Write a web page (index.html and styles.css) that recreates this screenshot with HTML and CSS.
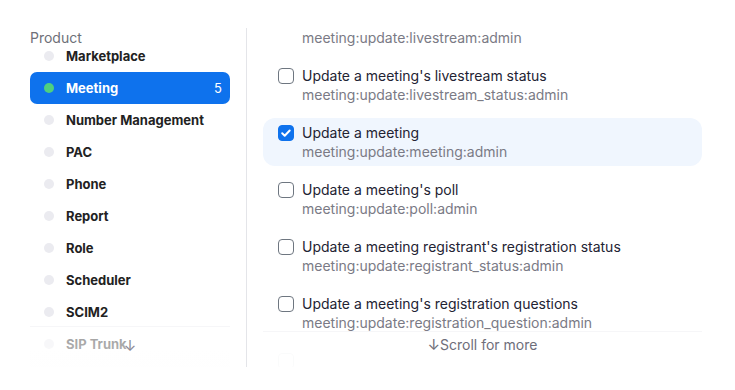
FILE: index.html
```html
<!DOCTYPE html>
<html lang="en">
<head>
    <meta charset="UTF-8">
    <title>Scopes - Meeting</title>
    <link rel="stylesheet" href="styles.css">
</head>
<body>
    <div class="picker">
        <aside class="sidebar">
            <div class="sidebar-label">Product</div>
            <ul class="product-list">
                <li class="product"><span class="dot"></span>Marketplace</li>
                <li class="product active"><span class="dot"></span>Meeting<span class="count">5</span></li>
                <li class="product"><span class="dot"></span>Number Management</li>
                <li class="product"><span class="dot"></span>PAC</li>
                <li class="product"><span class="dot"></span>Phone</li>
                <li class="product"><span class="dot"></span>Report</li>
                <li class="product"><span class="dot"></span>Role</li>
                <li class="product"><span class="dot"></span>Scheduler</li>
                <li class="product"><span class="dot"></span>SCIM2</li>
                <li class="product"><span class="dot"></span>SIP Trunk</li>
            </ul>
            <div class="fade fade-side"><span class="arrow">↓</span></div>
        </aside>

        <section class="scopes">
            <div class="scope-list">
                <label class="scope">
                    <input type="checkbox">
                    <span class="scope-text">
                        <span class="scope-title">Update a meeting's livestream</span>
                        <span class="scope-id">meeting:update:livestream:admin</span>
                    </span>
                </label>
                <label class="scope">
                    <input type="checkbox">
                    <span class="scope-text">
                        <span class="scope-title">Update a meeting's livestream status</span>
                        <span class="scope-id">meeting:update:livestream_status:admin</span>
                    </span>
                </label>
                <label class="scope selected">
                    <input type="checkbox" checked>
                    <span class="scope-text">
                        <span class="scope-title">Update a meeting</span>
                        <span class="scope-id">meeting:update:meeting:admin</span>
                    </span>
                </label>
                <label class="scope">
                    <input type="checkbox">
                    <span class="scope-text">
                        <span class="scope-title">Update a meeting's poll</span>
                        <span class="scope-id">meeting:update:poll:admin</span>
                    </span>
                </label>
                <label class="scope">
                    <input type="checkbox">
                    <span class="scope-text">
                        <span class="scope-title">Update a meeting registrant's registration status</span>
                        <span class="scope-id">meeting:update:registrant_status:admin</span>
                    </span>
                </label>
                <label class="scope">
                    <input type="checkbox">
                    <span class="scope-text">
                        <span class="scope-title">Update a meeting's registration questions</span>
                        <span class="scope-id">meeting:update:registration_question:admin</span>
                    </span>
                </label>
                <label class="scope">
                    <input type="checkbox">
                </label>
            </div>
            <div class="fade fade-main"><span class="arrow">↓</span>Scroll for more</div>
        </section>
    </div>
</body>
</html>
```

FILE: styles.css
```css
body {
    margin: 0;
    font-family: Inter, 'Noto Sans', sans-serif;
    background: #fff;
    color: #222;
}
.picker {
    display: flex;
    height: 339px;
    margin-top: 28px;
}

/* left column */
.sidebar {
    position: relative;
    width: 216px;
    padding-left: 30px;
    border-right: 1px solid #e4e5e9;
    overflow: hidden;
}
.sidebar-label {
    font-size: 14px;
    line-height: 20px;
    height: 12px;
    color: #6e7078;
}
.product-list {
    list-style: none;
    margin: 0;
    padding: 0;
    width: 200px;
}
.product {
    display: flex;
    align-items: center;
    height: 32px;
    padding: 0 8px 0 14px;
    border-radius: 7px;
    font-size: 13px;
    font-weight: 700;
    color: #222;
}
.dot {
    width: 10px;
    height: 10px;
    border-radius: 50%;
    background: #ebebf0;
    margin-right: 12px;
}
.product.active {
    background: #0e72ed;
    color: #fff;
}
.product.active .dot {
    background: #4fd07f;
}
.count {
    margin-left: auto;
    font-weight: 400;
    font-size: 13px;
}

/* right column */
.scopes {
    position: relative;
    flex: 1;
    padding-left: 16px;
    overflow: hidden;
}
.scope-list {
    display: flex;
    flex-direction: column;
    gap: 9px;
    width: 439px;
    margin-top: -24px;
}
.scope {
    display: flex;
    align-items: flex-start;
    padding: 5px 15px;
    border-radius: 12px;
}
.scope.selected {
    background: #f0f6fe;
}
.scope input {
    appearance: none;
    -webkit-appearance: none;
    flex: none;
    width: 16px;
    height: 16px;
    margin: 2px 8px 0 0;
    border: 1px solid #6e7680;
    border-radius: 4px;
    background: #fff;
}
.scope input:checked {
    border-color: #0e72ed;
    background: #0e72ed url("data:image/svg+xml,%3Csvg xmlns='http://www.w3.org/2000/svg' viewBox='0 0 16 16'%3E%3Cpath d='M4.2 8.3l2.5 2.4 5-5.2' fill='none' stroke='%23fff' stroke-width='2' stroke-linecap='round' stroke-linejoin='round'/%3E%3C/svg%3E") center / 16px no-repeat;
}
.scope-text {
    display: flex;
    flex-direction: column;
}
.scope-title {
    font-size: 14px;
    line-height: 20px;
    color: #232333;
}
.scope-id {
    font-size: 14px;
    line-height: 18px;
    color: #7a7a85;
}

/* bottom fades */
.fade {
    position: absolute;
    left: 0;
    right: 0;
    bottom: 0;
    text-align: center;
}
.fade-side {
    height: 40px;
    background: linear-gradient(rgba(255, 255, 255, 0.55), rgba(255, 255, 255, 0.7));
    border-top: 1px solid rgba(240, 240, 244, 0.6);
    left: 30px;
    width: 200px;
}
.fade-side .arrow {
    display: block;
    margin-top: 9px;
    font-size: 15px;
    color: #8a8a94;
}
.fade-main {
    left: 16px;
    width: 439px;
    height: 32px;
    padding-top: 3px;
    background: rgba(255, 255, 255, 0.97);
    border-top: 1px solid #f6f6f8;
    font-size: 14px;
    color: #6e6e7a;
}
.fade-main .arrow {
    font-size: 15px;
}
```
